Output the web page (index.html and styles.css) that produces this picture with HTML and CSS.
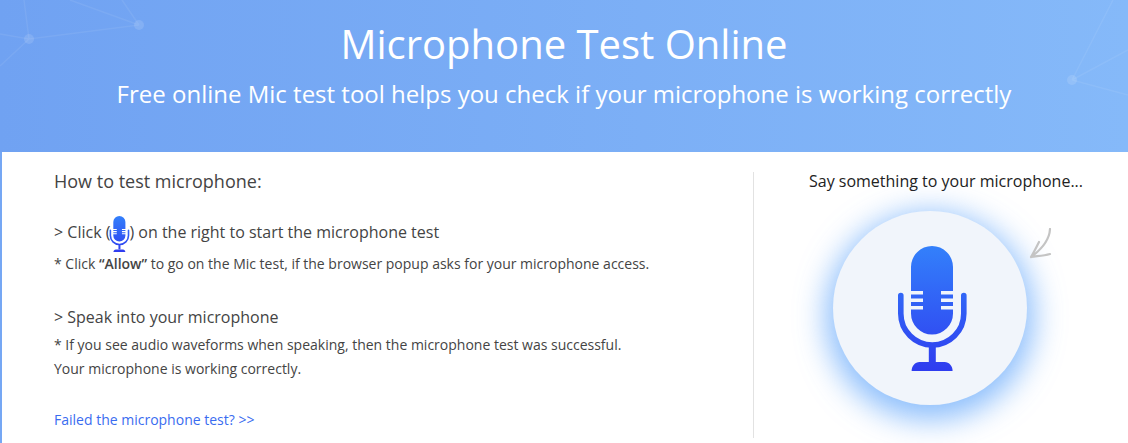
FILE: index.html
```html
<!DOCTYPE html>
<html lang="en">
<head>
<meta charset="utf-8">
<title>Microphone Test Online</title>
<link rel="stylesheet" href="styles.css">
</head>
<body>
<svg width="0" height="0" class="defs">
  <defs>
    <linearGradient id="micFillU" gradientUnits="userSpaceOnUse" x1="34" y1="0" x2="34" y2="125">
      <stop offset="0" stop-color="#3380fb"/>
      <stop offset="1" stop-color="#2f3cef"/>
    </linearGradient>
    <symbol id="mic" viewBox="0 0 69 125">
      <path fill="url(#micFillU)" d="M13 21a21 21 0 0 1 42 0v24h-12v3.500h12v4h-12v3.500h12v4h-12v3.500h12v4h0v0a21 21 0 0 1-42 0v-4h12v-3.500h-12v-4h12v-3.500h-12v-4h12v-3.500h-12z"/>
      <path fill="none" stroke="url(#micFillU)" stroke-width="5.600" stroke-linecap="round" d="M2.800 49.500v18a31.500 31.500 0 0 0 63 0v-18"/>
      <path fill="url(#micFillU)" d="M30.800 98h7v18h-7z"/>
      <path fill="url(#micFillU)" d="M13.600 125c0-5 3.400-9 8-9h25c4.600 0 8 4 8 9z"/>
    </symbol>
  </defs>
</svg>
<header class="hero">
  <svg class="hero-net" viewBox="0 0 1128 152" preserveAspectRatio="none" aria-hidden="true">
    <g class="net-lines">
      <path d="M0 34 29 39 139 25M29 39 0 66M29 39 24 0M139 25 70 0M139 25 122 0"/>
      <path d="M1072 80 1128 50M1072 80 1113 0M1072 80 1128 95"/>
    </g>
    <g class="net-dots">
      <circle cx="29" cy="39" r="5"/>
      <circle cx="139" cy="25" r="5"/>
      <circle cx="1072" cy="80" r="5"/>
    </g>
  </svg>
  <h1 class="hero-title">Microphone Test Online</h1>
  <p class="hero-sub">Free online Mic test tool helps you check if your microphone is working correctly</p>
</header>
<main class="panel">
  <section class="guide">
    <h2 class="guide-title">How to test microphone:</h2>
    <p class="step step-first">&gt; Click (<svg class="mic-inline" aria-hidden="true"><use href="#mic"/></svg>) on the right to start the microphone test</p>
    <p class="note note-first">* Click <b>“Allow”</b> to go on the Mic test, if the browser popup asks for your microphone access.</p>
    <p class="step step-second">&gt; Speak into your microphone</p>
    <p class="note note-second">* If you see audio waveforms when speaking, then the microphone test was successful.<br>Your microphone is working correctly.</p>
    <a class="fail-link" href="#">Failed the microphone test? &gt;&gt;</a>
  </section>
  <section class="tester">
    <p class="tester-prompt">Say something to your microphone...</p>
    <div class="mic-stage">
      <button class="mic-button" type="button" aria-label="Start microphone test">
        <svg class="mic-large" aria-hidden="true"><use href="#mic"/></svg>
      </button>
      <svg class="hint-arrow" viewBox="0 0 24 32" aria-hidden="true">
        <path d="M21 1C20.500 11 13 21 2 29M10 14C7.500 19 5 24 2 29C8 28 14 28 21 26"/>
      </svg>
    </div>
  </section>
</main>
</body>
</html>
```
FILE: styles.css
```css
* { box-sizing: border-box; }
html, body { margin: 0; padding: 0; }
body {
  height: 443px;
  overflow: hidden;
  background: #fff;
  font-family: "Open Sans", "Noto Sans", sans-serif;
  color: #444;
}
.defs { position: absolute; }

.hero {
  position: relative;
  height: 152px;
  padding-top: 16px;
  text-align: center;
  color: #fff;
  background: linear-gradient(90deg, #70a2f2 0%, #85b9f9 100%);
  overflow: hidden;
}
.hero-net { position: absolute; inset: 0; width: 100%; height: 100%; }
.net-lines { fill: none; stroke: rgba(255,255,255,.07); stroke-width: 1.500; }
.net-dots { fill: rgba(255,255,255,.12); }
.hero-title {
  position: relative;
  margin: 0;
  font-size: 40px;
  font-weight: 400;
  line-height: 56px;
}
.hero-sub {
  position: relative;
  margin: 6px 0 0;
  font-size: 24px;
  line-height: 32px;
}

.panel {
  display: flex;
  height: 291px;
  border-left: 2px solid #75a7f4;
  padding-top: 20px;
}
.guide {
  flex: none;
  width: 752px;
  margin-bottom: 5px;
  border-right: 1px solid #e2e2e2;
  padding-left: 52px;
  display: flex;
  flex-direction: column;
  align-items: flex-start;
}
.guide-title {
  margin: -1px 0 0;
  font-size: 18px;
  font-weight: 400;
  line-height: 20px;
}
.step {
  margin: 0;
  font-size: 16px;
  line-height: 22px;
}
.step-first { margin-top: 30px; }
.step-second { margin-top: 30px; }
.mic-inline {
  width: 23px;
  height: 36px;
  margin: -7px -2px -7px -2px;
  vertical-align: middle;
}
.note {
  font-size: 14px;
  line-height: 24px;
}
.note-first { margin: 7px 0 0; }
.note-second { margin: 5px 0 0; }
.note b { font-weight: 600; }
.fail-link {
  margin-top: 29px;
  font-size: 14px;
  line-height: 20px;
  color: #3a6cf0;
  text-decoration: none;
}

.tester {
  flex: 1;
  display: flex;
  flex-direction: column;
  align-items: flex-start;
}
.tester-prompt {
  margin: -1px 0 0;
  width: 100%;
  padding-left: 10px;
  text-align: center;
  font-size: 16px;
  line-height: 20px;
  color: #222;
}
.mic-stage {
  position: relative;
  margin: 20px 0 0 79px;
}
.mic-button {
  display: flex;
  align-items: flex-start;
  justify-content: center;
  width: 194px;
  height: 194px;
  padding: 35px 0 0 4px;
  border: 0;
  border-radius: 50%;
  background: #f1f5fb;
  box-shadow: 0 8px 30px 7px rgba(70,150,250,.62);
}
.mic-large { width: 69px; height: 125px; }
.hint-arrow {
  position: absolute;
  left: 196px;
  top: 17px;
  width: 24px;
  height: 32px;
  fill: none;
  stroke: #c4c4c4;
  stroke-width: 2.200;
  stroke-linecap: round;
  stroke-linejoin: round;
}
```
